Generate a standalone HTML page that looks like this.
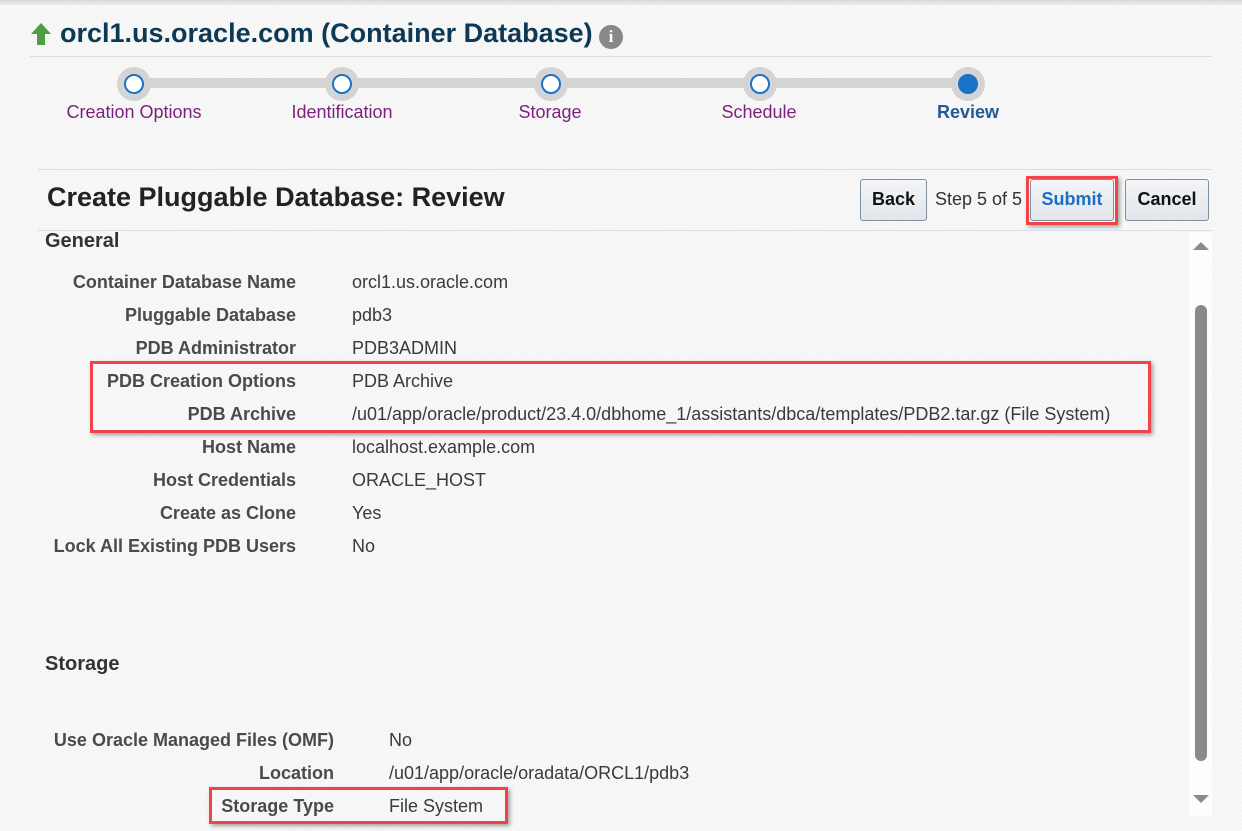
<!DOCTYPE html>
<html><head><meta charset="utf-8"><style>
*{margin:0;padding:0;box-sizing:border-box}
body{width:1242px;height:831px;overflow:hidden;position:relative;font-family:"Liberation Sans",Arial,sans-serif;background:#f6f6f6;background-image:repeating-linear-gradient(135deg,#f8f8f8 0 2px,#f3f3f3 2px 3px);}
.a{position:absolute;white-space:nowrap}
.lbl{position:absolute;font-weight:bold;color:#4a4a4a;font-size:18px;text-align:right;white-space:nowrap}
.val{position:absolute;color:#3a3a3a;font-size:18px;white-space:nowrap}
.red{position:absolute;border:3px solid #f2424a;box-shadow:2px 2px 4px rgba(0,0,0,.35)}
.step{position:absolute;top:67px;width:34px;height:34px;border-radius:50%;background:#d4d4d4}
.step i{position:absolute;left:7px;top:7px;width:20px;height:20px;border-radius:50%;background:#fff;border:2px solid #1a73c8}
.sl{position:absolute;top:102px;font-size:18px;color:#7b1f7d;transform:translateX(-50%)}
.btn{position:absolute;top:179px;height:42px;border:1px solid #7e8f9e;border-radius:3px;background:linear-gradient(#f3f5f7,#e2e6ea);font-weight:bold;font-size:18px;text-align:center;line-height:38px;color:#111}
</style></head><body>
<div class="a" style="left:0;top:0;width:1242px;height:5px;background:linear-gradient(#d8d8d8,#ececec)"></div>
<svg class="a" style="left:29px;top:22px" width="24" height="24" viewBox="0 0 24 24"><path d="M12 1 L22 12 H16 V23 H8 V12 H2 Z" fill="#4f9e44"/></svg>
<div class="a" style="left:60px;top:18px;font-size:27px;font-weight:bold;color:#0c3a55">orcl1.us.oracle.com (Container Database)</div>
<div class="a" style="left:599px;top:25px;width:24px;height:24px;border-radius:50%;background:#888;color:#fff;font-family:'Liberation Serif',serif;font-weight:bold;font-size:17px;text-align:center;line-height:24px">i</div>
<div class="a" style="left:30px;top:56px;width:1182px;height:1px;background:#d3dfe8"></div>
<div class="a" style="left:134px;top:78px;width:834px;height:10px;background:#d4d4d4"></div>
<div class="step" style="left:117px"><i></i></div>
<div class="step" style="left:325px"><i></i></div>
<div class="step" style="left:534px"><i></i></div>
<div class="step" style="left:743px"><i></i></div>
<div class="step" style="left:951px"><i style="background:#1a73c8"></i></div>
<div class="sl" style="left:134px">Creation Options</div>
<div class="sl" style="left:342px">Identification</div>
<div class="sl" style="left:550px">Storage</div>
<div class="sl" style="left:759px">Schedule</div>
<div class="sl" style="left:968px;color:#1f5b94;font-weight:bold">Review</div>
<div class="a" style="left:38px;top:169px;width:1174px;height:1px;background:#d3dfe8"></div>
<div class="a" style="left:47px;top:182px;font-size:27px;font-weight:bold;color:#222">Create Pluggable Database: Review</div>
<div class="btn" style="left:860px;width:67px">Back</div>
<div class="a" style="left:935px;top:189px;font-size:18px;color:#333">Step 5 of 5</div>
<div class="btn" style="left:1030px;width:84px;color:#1a6fc4">Submit</div>
<div class="red" style="left:1026px;top:176px;width:92px;height:49px"></div>
<div class="btn" style="left:1125px;width:84px">Cancel</div>
<div class="a" style="left:38px;top:230px;width:1174px;height:1px;background:#d3dfe8"></div>
<div class="a" style="left:1189px;top:232px;width:23px;height:584px;background:#fdfdfd"></div>
<div class="a" style="left:1195px;top:305px;width:12px;height:456px;border-radius:6px;background:#8a8a8a"></div>
<div class="a" style="left:1193px;top:242px;width:0;height:0;border-left:8px solid transparent;border-right:8px solid transparent;border-bottom:8px solid #8a8a8a"></div>
<div class="a" style="left:1193px;top:795px;width:0;height:0;border-left:8px solid transparent;border-right:8px solid transparent;border-top:8px solid #8a8a8a"></div>
<div class="a" style="left:45px;top:230px;font-size:20px;font-weight:bold;color:#333">General</div>
<div class="lbl" style="right:946px;top:272px">Container Database Name</div><div class="val" style="left:352px;top:272px">orcl1.us.oracle.com</div>
<div class="lbl" style="right:946px;top:305px">Pluggable Database</div><div class="val" style="left:352px;top:305px">pdb3</div>
<div class="lbl" style="right:946px;top:338px">PDB Administrator</div><div class="val" style="left:352px;top:338px">PDB3ADMIN</div>
<div class="lbl" style="right:946px;top:371px">PDB Creation Options</div><div class="val" style="left:352px;top:371px">PDB Archive</div>
<div class="lbl" style="right:946px;top:404px">PDB Archive</div><div class="val" style="left:352px;top:404px">/u01/app/oracle/product/23.4.0/dbhome_1/assistants/dbca/templates/PDB2.tar.gz (File System)</div>
<div class="lbl" style="right:946px;top:437px">Host Name</div><div class="val" style="left:352px;top:437px">localhost.example.com</div>
<div class="lbl" style="right:946px;top:470px">Host Credentials</div><div class="val" style="left:352px;top:470px">ORACLE_HOST</div>
<div class="lbl" style="right:946px;top:503px">Create as Clone</div><div class="val" style="left:352px;top:503px">Yes</div>
<div class="lbl" style="right:946px;top:536px">Lock All Existing PDB Users</div><div class="val" style="left:352px;top:536px">No</div>
<div class="red" style="left:90px;top:361px;width:1061px;height:72px"></div>
<div class="a" style="left:45px;top:653px;font-size:20px;font-weight:bold;color:#333">Storage</div>
<div class="lbl" style="right:908px;top:730px">Use Oracle Managed Files (OMF)</div><div class="val" style="left:389px;top:730px">No</div>
<div class="lbl" style="right:908px;top:763px">Location</div><div class="val" style="left:389px;top:763px">/u01/app/oracle/oradata/ORCL1/pdb3</div>
<div class="lbl" style="right:908px;top:796px">Storage Type</div><div class="val" style="left:389px;top:796px">File System</div>
<div class="red" style="left:209px;top:787px;width:299px;height:37px"></div>
</body></html>
